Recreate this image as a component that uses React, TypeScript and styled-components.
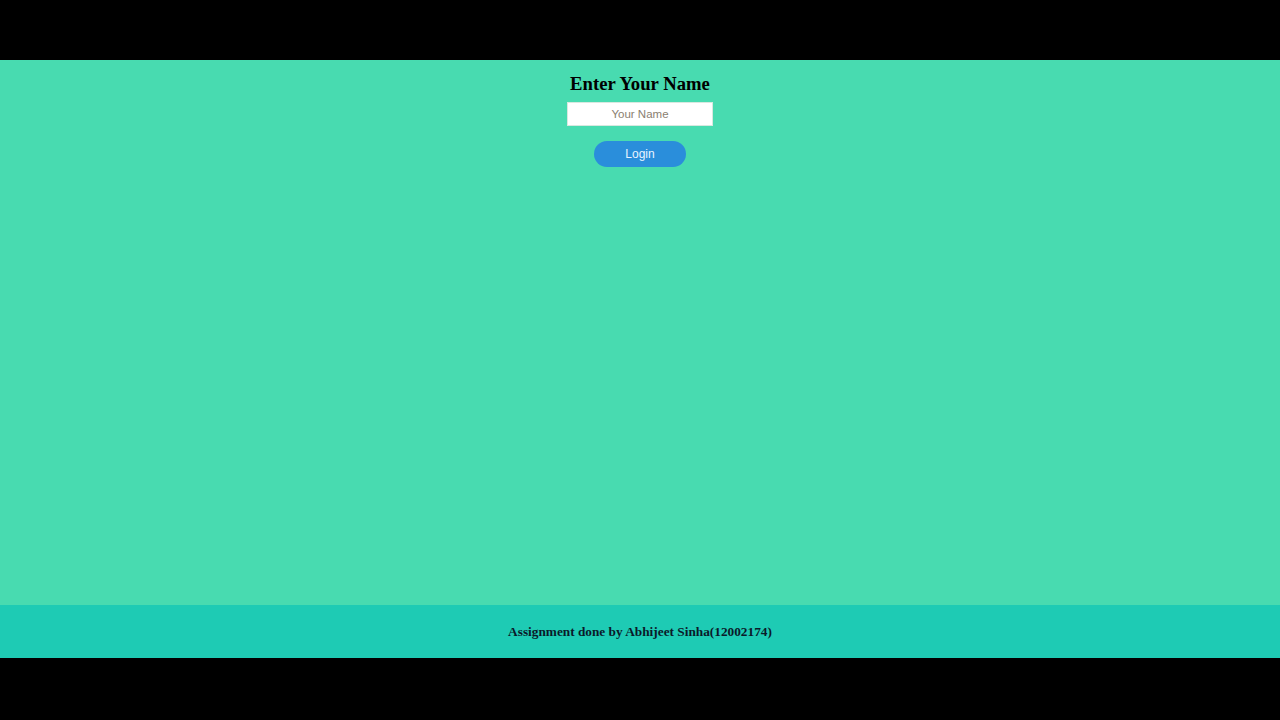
import React from "react";
import styled, { createGlobalStyle } from "styled-components";

const Global = createGlobalStyle`
  html, body { margin: 0; padding: 0; background: #000; }
  body { font-family: "Liberation Serif", "Times New Roman", serif; }
`;

const Screen = styled.div`
  width: 1280px;
  height: 720px;
  background: #000;
  display: flex;
  flex-direction: column;
  padding: 60px 0 62px;
  box-sizing: border-box;
`;

const Main = styled.main`
  flex: 1;
  background: #48dbb0;
  display: flex;
  flex-direction: column;
  align-items: center;
  padding-top: 12px;
`;

const Title = styled.h2`
  margin: 0;
  font-family: "Liberation Serif", "Times New Roman", serif;
  font-weight: bold;
  font-size: 18.7px;
  line-height: 24px;
  color: #000;
`;

const NameInput = styled.input`
  margin-top: 6px;
  width: 146px;
  height: 24px;
  box-sizing: border-box;
  border: 1px solid #d8e8e0;
  background: #fff;
  text-align: center;
  font-family: "Liberation Sans", Arial, sans-serif;
  font-size: 11.5px;
  outline: none;
  &::placeholder { color: #8a8070; }
`;

const LoginButton = styled.button`
  margin-top: 15px;
  width: 92px;
  height: 26px;
  border: none;
  border-radius: 13px;
  background: #2a8edb;
  color: #e8f4ff;
  font-family: "Liberation Sans", Arial, sans-serif;
  font-size: 12px;
  cursor: pointer;
`;

const Footer = styled.footer`
  height: 53px;
  background: #1ecbb4;
  display: flex;
  align-items: center;
  justify-content: center;
  padding-top: 1px;
  box-sizing: border-box;
`;

const FooterText = styled.h5`
  margin: 0;
  font-family: "Liberation Serif", "Times New Roman", serif;
  font-weight: bold;
  font-size: 13.3px;
  color: #0b1a2a;
`;

export default function App() {
  return (
    <>
      <Global />
      <Screen>
        <Main>
          <Title>Enter Your Name</Title>
          <NameInput placeholder="Your Name" />
          <LoginButton>Login</LoginButton>
        </Main>
        <Footer>
          <FooterText>Assignment done by Abhijeet Sinha(12002174)</FooterText>
        </Footer>
      </Screen>
    </>
  );
}
